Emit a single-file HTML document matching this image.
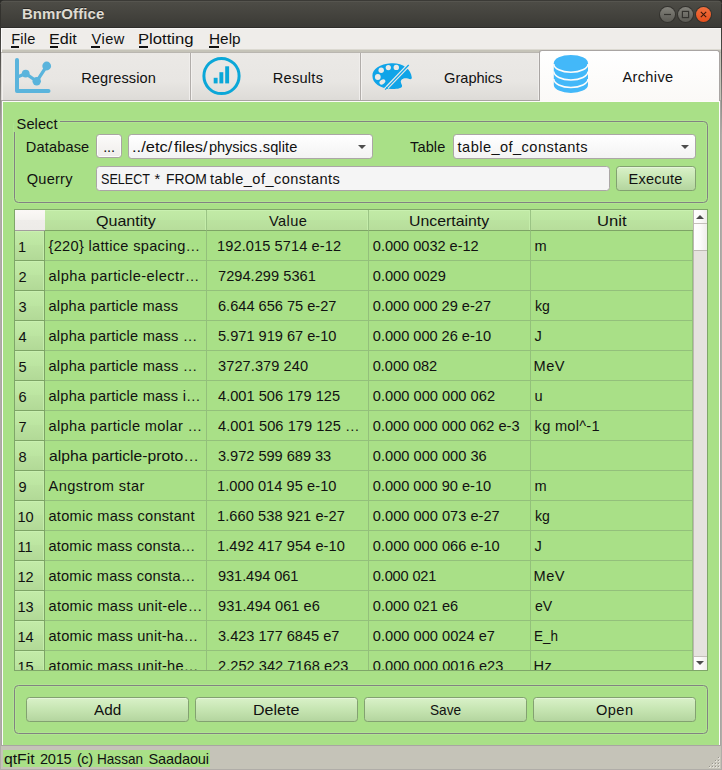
<!DOCTYPE html>
<html>
<head>
<meta charset="utf-8">
<title>BnmrOffice</title>
<style>
*{box-sizing:border-box;margin:0;padding:0}
html,body{width:722px;height:770px;overflow:hidden}
body{position:relative;background:linear-gradient(#33322e 0,#3a3935 28px,#55534f 60px,#8a8883 100px,#b0ada8 135px,#b0ada8 100%);font-family:"Liberation Sans",sans-serif;font-size:14.5px;color:#111}
.abs{position:absolute}
.t{position:absolute;white-space:nowrap;line-height:20px;height:20px;font-size:14.6px}
/* title bar */
#title{left:0;top:0;width:722px;height:28px;background:linear-gradient(#3b3a36 0,#3b3a36 1px,#56554f 1px,#56554f 2px,#4d4c46 2px,#403f3a 20px,#3b3a36 27px,#2e2d2a 27px,#2e2d2a 28px);border-radius:5px 5px 0 0}
#corner-l,#corner-r{top:0;width:6px;height:6px;background:#2b2b28}
#title-text{left:23px;top:4px;color:#dfdbd2;font-weight:bold;font-size:15px;letter-spacing:0.35px;text-shadow:0 -1px 0 rgba(0,0,0,.5)}
.wb{position:absolute;top:6px;width:17px;height:17px;border-radius:50%;background:#33322e}
.wb i{position:absolute;left:1px;top:1px;width:15px;height:15px;border-radius:50%;background:linear-gradient(#83827b,#5b5a54)}
.wb.close i{background:linear-gradient(#f0703f,#e64f1c)}
/* menu bar */
#win{left:1px;top:28px;width:720px;height:741px;background:#c5c3b8}
#menubar{left:1px;top:28px;width:720px;height:21px;background:#efedea;border-top:1px solid #f7f6f4}
#menustrip{left:1px;top:49px;width:720px;height:4px;background:linear-gradient(#dbd9d1 0,#dbd9d1 1px,#c5c3b8 1px,#c5c3b8 3px,#b9b6b0 3px)}
.m{top:29px;font-size:14.6px}
.ul{position:absolute;height:2px;top:46px;background:#111}
/* tabs */
#tabbar{left:1px;top:53px;width:538px;height:47px;background:#b1adaa}
.tab{position:absolute;top:53px;height:47px;background:linear-gradient(#ebe9e6,#e8e6e3 60%,#dddbd7);border-left:1px solid #f3f1ef;border-right:1px solid #f0eeec}
.tab.sel{top:50px;height:51px;background:linear-gradient(#ffffff,#fbf9f7);border:1px solid #a9a5a3;border-bottom:none;border-radius:3px 3px 0 0}
.tabtxt{font-size:14.6px}
/* pane */
#pane{left:1px;top:100px;width:720px;height:646px;background:#a9e087;border:1px solid #a9a5a2}
#paneline{left:2px;top:101px;width:718px;height:644px;border:1px solid #fdfbfb;border-bottom:none}
.gb{position:absolute;border:1px solid #828282;border-radius:4.5px;box-shadow:0 0 0 1px rgba(185,235,155,.45),inset 0 0 0 1px rgba(185,235,155,.45)}
.gbl{background:#a9e087;padding:0 2px}
.inp{position:absolute;background:#f5f5f5;border:1px solid #aba6a6;border-radius:3.5px}
.cmb{position:absolute;background:linear-gradient(#ffffff,#f3f3f3);border:1px solid #aba6a6;border-radius:3.5px}
.btn{position:absolute;border:1px solid #83a171;border-radius:3.5px;background:linear-gradient(#d9f1c8,#c6e5b2 50%,#b4d59f);box-shadow:inset 0 1px 0 rgba(255,255,255,.35)}
.wbtn{position:absolute;border:1px solid #a9a4a3;border-radius:3.5px;background:linear-gradient(#fcfbfa,#efedeb);box-shadow:inset 0 0 0 1px rgba(255,255,255,.8)}
.arrow{position:absolute;width:0;height:0;border-left:4px solid transparent;border-right:4px solid transparent;border-top:4.3px solid #4d4d4d}
/* table */
#tbl{left:14px;top:209px;width:694px;height:462px;border:1px solid #7fa569;background:#a9e087;overflow:hidden}
.hdr{position:absolute;top:0;height:21px;background:linear-gradient(#c2eba6 0,#bde6a2 50%,#bbe3a0 50%,#b7dd9b 100%);border-right:1px solid #9bc485;border-bottom:1px solid #7ea466;box-shadow:inset -1px 0 0 #c5edab,inset 0 1px 0 #c9f0b0;text-align:center;line-height:20px;font-size:14.6px}
.vh{position:absolute;left:0;width:30px;height:30px;background:linear-gradient(#c3eba8 0,#bce5a1 50%,#bae29f 50%,#b2d997 100%);border-right:1px solid #7da366;border-bottom:1px solid #7ea466;box-shadow:inset -1px 0 0 #c5edab,inset 0 1px 0 #c9f0b0}
.row{position:absolute;left:30px;width:648px;height:30px;border-bottom:1px solid #93c07b}
.cell{position:absolute;top:0;height:29px;border-right:1px solid #93c07b;line-height:30px;white-space:nowrap;overflow:hidden;font-size:14.6px}
.num{position:absolute;left:4px;top:7px;line-height:20px;font-size:14.6px}
/* status */
#status{left:0;top:769px;width:722px;height:1px;background:#b0ada8}
#statuslbl{left:3px;top:750px;width:207px;height:17px;background:#a9e087;line-height:18px;font-size:14.6px;padding-left:1px}
</style>
</head>
<body>
<!-- TITLE BAR -->
<div class="abs" id="corner-l" style="left:0"></div>
<div class="abs" id="corner-r" style="left:716px"></div>
<div class="abs" id="title"></div>
<div class="abs" style="left:0;top:4px;width:1px;height:24px;background:#33322e"></div>
<div class="abs" style="left:721px;top:4px;width:1px;height:24px;background:#33322e"></div>
<div class="wb" style="left:659px"><i></i></div>
<div class="wb" style="left:677px"><i></i></div>
<div class="wb close" style="left:695px"><i></i></div>
<svg class="abs" style="left:659px;top:6px" width="54" height="17" viewBox="0 0 54 17">
 <path d="M5 8.5h7" stroke="#34332f" stroke-width="1.2" fill="none"/>
 <rect x="23.4" y="5.4" width="6.2" height="6.2" stroke="#34332f" stroke-width="1.2" fill="none"/>
 <path d="M41.8 5.8l5.4 5.4M47.2 5.8l-5.4 5.4" stroke="#3a180a" stroke-width="1.05" fill="none"/>
</svg>

<!-- MENU BAR -->
<div class="abs" id="win"></div>
<div class="abs" id="menubar"></div>
<div class="abs" id="menustrip"></div>
<div class="abs" style="left:1px;top:28px;width:1px;height:24px;background:#fbfafa"></div>
<div class="ul" style="left:11px;width:8px"></div>
<div class="ul" style="left:50px;width:8px"></div>
<div class="ul" style="left:91px;width:9px"></div>
<div class="ul" style="left:139px;width:9px"></div>
<div class="ul" style="left:209px;width:10px"></div>

<!-- TABS -->
<div class="abs" id="pane"></div>
<div class="abs" id="paneline"></div>
<div class="abs" id="tabbar"></div>
<div class="tab" style="left:1px;width:189px;border-left-color:#dddbd7;box-shadow:inset 1px 0 0 #f3f1ef"></div>
<div class="tab" style="left:191px;width:169px"></div>
<div class="tab" style="left:361px;width:178px"></div>
<div class="tab sel" style="left:539px;width:181px"></div>

<!-- tab icons -->
<svg class="abs" style="left:10px;top:54px" width="46" height="42" viewBox="10 54 46 42">
 <g stroke="#5ab4dc" fill="none" stroke-linecap="round" stroke-linejoin="round">
  <path d="M17 60 V91 H48.5" stroke-width="4"/>
  <path d="M17.5 77 L25.7 73.6 L36.7 81.3 L46.7 66" stroke-width="3.2"/>
 </g>
 <g fill="#5ab4dc"><circle cx="25.7" cy="73.6" r="3.9"/><circle cx="36.7" cy="81.3" r="4.2"/><circle cx="46.7" cy="66" r="4.4"/></g>
</svg>
<svg class="abs" style="left:200px;top:54px" width="44" height="44" viewBox="200 54 44 44">
 <circle cx="221.5" cy="76" r="17.6" stroke="#0ba7d8" stroke-width="3" fill="none"/>
 <g fill="#0ba7d8"><rect x="213.7" y="77.8" width="3.9" height="5.6"/><rect x="219.4" y="72.2" width="3.9" height="11.2"/><rect x="225.2" y="66.3" width="3.9" height="17.1"/></g>
</svg>
<svg class="abs" style="left:370px;top:60px" width="44" height="32" viewBox="370 60 44 32">
 <path fill="#10a4e8" d="M391 63.3 C402 62.6 411 68.5 411.8 77.5 C411.8 79.5 410.5 79.4 408 78.6 C404 77.3 400.5 79.2 400.8 82 C401 84 402.5 85 402 86.6 C401 88.8 396 89.2 391 89 C380 88.6 372.4 83.2 372.4 75.8 C372.4 68.8 380 64 391 63.3 Z"/>
 <g fill="#eceae7"><circle cx="377.8" cy="77" r="2.9"/><circle cx="381.2" cy="70.2" r="2.7"/><circle cx="388.3" cy="67.6" r="2.6"/><circle cx="396.3" cy="67.4" r="2.7"/><ellipse cx="382.4" cy="81.9" rx="3.2" ry="2.2" transform="rotate(-35 382.4 81.9)"/></g>
 <path d="M385.6 89 L408.5 65.2" stroke="#eceae7" stroke-width="3.7"/>
 <path d="M385.2 89.6 L408.7 65" stroke="#10a4e8" stroke-width="1.35"/>
 <path d="M385.6 86.6 l2.6 2.4" stroke="#10a4e8" stroke-width="0.9"/>
</svg>
<svg class="abs" style="left:552px;top:53px" width="38" height="42" viewBox="552 53 38 42">
 <g fill="#43b8f9">
  <path d="M553.8 63.2 a17.1 8.3 0 0 1 34.2 0 v21.5 a17.1 8.3 0 0 1 -34.2 0 Z"/>
 </g>
 <g fill="none" stroke="#fdfcfb" stroke-width="1.5">
  <path d="M553.8 63.9 a17.1 8.3 0 0 0 34.2 0"/>
  <path d="M553.8 71.6 a17.1 8.3 0 0 0 34.2 0"/>
  <path d="M553.8 79.1 a17.1 8.3 0 0 0 34.2 0"/>
 </g>
</svg>

<!-- PANE -->

<!-- Select group -->
<div class="gb" style="left:14px;top:121px;width:694px;height:82px"></div>
<div class="abs" style="left:14px;top:114px;width:46px;height:18px;background:#a9e087"></div>
<div class="wbtn" style="left:96px;top:134px;width:26px;height:24px"></div>
<div class="cmb" style="left:128px;top:134px;width:245px;height:25px"></div>
<div class="arrow" style="left:358px;top:145px"></div>
<div class="cmb" style="left:453px;top:134px;width:243px;height:25px"></div>
<div class="arrow" style="left:681px;top:145px"></div>
<div class="inp" style="left:96px;top:166px;width:514px;height:25px"></div>
<div class="btn" style="left:616px;top:166px;width:80px;height:25px"></div>

<!-- TABLE -->
<div class="abs" id="tbl">
 <div class="hdr" style="left:0;width:30px;background:linear-gradient(#fbf8f6,#f4f2ef 50%,#efedea 50%,#edebe8);border-right:none;border-bottom-color:#a39c9e;box-shadow:none"></div>
 <div class="hdr" style="left:30px;width:162px"></div>
 <div class="hdr" style="left:192px;width:162px"></div>
 <div class="hdr" style="left:354px;width:162px"></div>
 <div class="hdr" style="left:516px;width:163px;border-right:none;box-shadow:inset 0 1px 0 #c9f0b0"></div>
 <!-- rows inserted below -->
<div class="vh" style="top:21px"></div><div class="row" style="top:21px"><div class="cell" style="left:0;width:162px"></div><div class="cell" style="left:162px;width:162px"></div><div class="cell" style="left:324px;width:162px"></div><div class="cell" style="left:486px;width:162px"></div></div>
<div class="vh" style="top:51px"></div><div class="row" style="top:51px"><div class="cell" style="left:0;width:162px"></div><div class="cell" style="left:162px;width:162px"></div><div class="cell" style="left:324px;width:162px"></div><div class="cell" style="left:486px;width:162px"></div></div>
<div class="vh" style="top:81px"></div><div class="row" style="top:81px"><div class="cell" style="left:0;width:162px"></div><div class="cell" style="left:162px;width:162px"></div><div class="cell" style="left:324px;width:162px"></div><div class="cell" style="left:486px;width:162px"></div></div>
<div class="vh" style="top:111px"></div><div class="row" style="top:111px"><div class="cell" style="left:0;width:162px"></div><div class="cell" style="left:162px;width:162px"></div><div class="cell" style="left:324px;width:162px"></div><div class="cell" style="left:486px;width:162px"></div></div>
<div class="vh" style="top:141px"></div><div class="row" style="top:141px"><div class="cell" style="left:0;width:162px"></div><div class="cell" style="left:162px;width:162px"></div><div class="cell" style="left:324px;width:162px"></div><div class="cell" style="left:486px;width:162px"></div></div>
<div class="vh" style="top:171px"></div><div class="row" style="top:171px"><div class="cell" style="left:0;width:162px"></div><div class="cell" style="left:162px;width:162px"></div><div class="cell" style="left:324px;width:162px"></div><div class="cell" style="left:486px;width:162px"></div></div>
<div class="vh" style="top:201px"></div><div class="row" style="top:201px"><div class="cell" style="left:0;width:162px"></div><div class="cell" style="left:162px;width:162px"></div><div class="cell" style="left:324px;width:162px"></div><div class="cell" style="left:486px;width:162px"></div></div>
<div class="vh" style="top:231px"></div><div class="row" style="top:231px"><div class="cell" style="left:0;width:162px"></div><div class="cell" style="left:162px;width:162px"></div><div class="cell" style="left:324px;width:162px"></div><div class="cell" style="left:486px;width:162px"></div></div>
<div class="vh" style="top:261px"></div><div class="row" style="top:261px"><div class="cell" style="left:0;width:162px"></div><div class="cell" style="left:162px;width:162px"></div><div class="cell" style="left:324px;width:162px"></div><div class="cell" style="left:486px;width:162px"></div></div>
<div class="vh" style="top:291px"></div><div class="row" style="top:291px"><div class="cell" style="left:0;width:162px"></div><div class="cell" style="left:162px;width:162px"></div><div class="cell" style="left:324px;width:162px"></div><div class="cell" style="left:486px;width:162px"></div></div>
<div class="vh" style="top:321px"></div><div class="row" style="top:321px"><div class="cell" style="left:0;width:162px"></div><div class="cell" style="left:162px;width:162px"></div><div class="cell" style="left:324px;width:162px"></div><div class="cell" style="left:486px;width:162px"></div></div>
<div class="vh" style="top:351px"></div><div class="row" style="top:351px"><div class="cell" style="left:0;width:162px"></div><div class="cell" style="left:162px;width:162px"></div><div class="cell" style="left:324px;width:162px"></div><div class="cell" style="left:486px;width:162px"></div></div>
<div class="vh" style="top:381px"></div><div class="row" style="top:381px"><div class="cell" style="left:0;width:162px"></div><div class="cell" style="left:162px;width:162px"></div><div class="cell" style="left:324px;width:162px"></div><div class="cell" style="left:486px;width:162px"></div></div>
<div class="vh" style="top:411px"></div><div class="row" style="top:411px"><div class="cell" style="left:0;width:162px"></div><div class="cell" style="left:162px;width:162px"></div><div class="cell" style="left:324px;width:162px"></div><div class="cell" style="left:486px;width:162px"></div></div>
<div class="vh" style="top:441px"></div><div class="row" style="top:441px"><div class="cell" style="left:0;width:162px"></div><div class="cell" style="left:162px;width:162px"></div><div class="cell" style="left:324px;width:162px"></div><div class="cell" style="left:486px;width:162px"></div></div>
 <!-- scrollbar -->
 <div class="abs" style="left:678px;top:0;width:14px;height:460px;background:#e5e2de;border-left:1px solid #bcb8b1"></div>
 <div class="abs" style="left:679px;top:0;width:13px;height:14px;background:linear-gradient(90deg,#fefefe,#fbfaf9 50%,#efedea);border-bottom:1px solid #c4c0ba"></div>
 <div class="abs" style="left:679px;top:14px;width:13px;height:27px;background:linear-gradient(90deg,#fefefe,#fbfaf9 50%,#efedea);border-bottom:1px solid #bdb9b3"></div>
 <div class="abs" style="left:679px;top:446px;width:13px;height:14px;background:linear-gradient(90deg,#fefefe,#fbfaf9 50%,#efedea);border-top:1px solid #c4c0ba"></div>
 <div class="arrow" style="left:681px;top:5px;border-top:none;border-bottom:4.2px solid #4a4a4a;border-left-width:4px;border-right-width:4px"></div>
 <div class="arrow" style="left:681px;top:451px;border-top-width:4.2px"></div>
</div>

<!-- bottom group -->
<div class="gb" style="left:14px;top:685px;width:694px;height:49px"></div>
<div class="btn" style="left:26px;top:697px;width:163px;height:25px"></div>
<div class="btn" style="left:195px;top:697px;width:163px;height:25px"></div>
<div class="btn" style="left:364px;top:697px;width:163px;height:25px"></div>
<div class="btn" style="left:533px;top:697px;width:163px;height:25px"></div>

<div class="abs" id="clip" style="left:0;top:0;width:722px;height:670px;overflow:hidden">
<div class="t" style="left:18.00px;top:236.94px;letter-spacing:0.000px">1</div>
<div class="t" style="left:48.50px;top:235.94px;letter-spacing:0.308px">{220} lattice spacing…</div>
<div class="t" style="left:217.00px;top:235.94px;letter-spacing:0.093px">192.015 5714 e-12</div>
<div class="t" style="left:372.80px;top:235.94px;letter-spacing:-0.028px">0.000 0032 e-12</div>
<div class="t" style="left:534.60px;top:235.94px;letter-spacing:0.000px">m</div>
<div class="t" style="left:18.40px;top:266.94px;letter-spacing:0.000px">2</div>
<div class="t" style="left:48.50px;top:265.94px;letter-spacing:0.421px">alpha particle-electr…</div>
<div class="t" style="left:218.00px;top:265.94px;letter-spacing:0.036px">7294.299 5361</div>
<div class="t" style="left:372.80px;top:265.94px;letter-spacing:-0.003px">0.000 0029</div>
<div class="t" style="left:18.40px;top:296.94px;letter-spacing:0.000px">3</div>
<div class="t" style="left:48.50px;top:295.94px;letter-spacing:0.209px">alpha particle mass</div>
<div class="t" style="left:218.00px;top:295.94px;letter-spacing:-0.004px">6.644 656 75 e-27</div>
<div class="t" style="left:372.80px;top:295.94px;letter-spacing:-0.016px">0.000 000 29 e-27</div>
<div class="t" style="left:534.60px;top:295.94px;letter-spacing:0.000px;transform:scaleX(0.9610);transform-origin:0 0">kg</div>
<div class="t" style="left:18.40px;top:326.94px;letter-spacing:0.000px">4</div>
<div class="t" style="left:48.50px;top:325.94px;letter-spacing:0.221px">alpha particle mass …</div>
<div class="t" style="left:218.00px;top:325.94px;letter-spacing:-0.004px">5.971 919 67 e-10</div>
<div class="t" style="left:372.80px;top:325.94px;letter-spacing:-0.016px">0.000 000 26 e-10</div>
<div class="t" style="left:534.60px;top:325.94px;letter-spacing:0.000px">J</div>
<div class="t" style="left:18.40px;top:356.94px;letter-spacing:0.000px">5</div>
<div class="t" style="left:48.50px;top:355.94px;letter-spacing:0.221px">alpha particle mass …</div>
<div class="t" style="left:218.00px;top:355.94px;letter-spacing:0.077px">3727.379 240</div>
<div class="t" style="left:372.80px;top:355.94px;letter-spacing:-0.063px">0.000 082</div>
<div class="t" style="left:533.60px;top:355.94px;letter-spacing:0.413px">MeV</div>
<div class="t" style="left:18.40px;top:386.94px;letter-spacing:0.000px">6</div>
<div class="t" style="left:48.50px;top:385.94px;letter-spacing:0.218px">alpha particle mass i…</div>
<div class="t" style="left:218.00px;top:385.94px;letter-spacing:0.024px">4.001 506 179 125</div>
<div class="t" style="left:372.80px;top:385.94px;letter-spacing:0.030px">0.000 000 000 062</div>
<div class="t" style="left:534.60px;top:385.94px;letter-spacing:0.000px">u</div>
<div class="t" style="left:18.40px;top:416.94px;letter-spacing:0.000px">7</div>
<div class="t" style="left:48.50px;top:415.94px;letter-spacing:0.366px">alpha particle molar …</div>
<div class="t" style="left:218.00px;top:415.94px;letter-spacing:0.067px">4.001 506 179 125 …</div>
<div class="t" style="left:372.80px;top:415.94px;letter-spacing:-0.008px">0.000 000 000 062 e-3</div>
<div class="t" style="left:534.60px;top:415.94px;letter-spacing:0.276px">kg mol^-1</div>
<div class="t" style="left:18.40px;top:446.94px;letter-spacing:0.000px">8</div>
<div class="t" style="left:48.50px;top:445.94px;letter-spacing:0.000px;transform:scaleX(1.0752);transform-origin:0 0">alpha particle-proto…</div>
<div class="t" style="left:218.00px;top:445.94px;letter-spacing:-0.027px">3.972 599 689 33</div>
<div class="t" style="left:372.80px;top:445.94px;letter-spacing:0.020px">0.000 000 000 36</div>
<div class="t" style="left:18.40px;top:476.94px;letter-spacing:0.000px">9</div>
<div class="t" style="left:48.50px;top:475.94px;letter-spacing:0.427px">Angstrom star</div>
<div class="t" style="left:217.00px;top:475.94px;letter-spacing:0.059px">1.000 014 95 e-10</div>
<div class="t" style="left:372.80px;top:475.94px;letter-spacing:-0.004px">0.000 000 90 e-10</div>
<div class="t" style="left:534.60px;top:475.94px;letter-spacing:0.000px">m</div>
<div class="t" style="left:17.40px;top:506.94px;letter-spacing:-0.116px">10</div>
<div class="t" style="left:48.50px;top:505.94px;letter-spacing:0.254px">atomic mass constant</div>
<div class="t" style="left:217.00px;top:505.94px;letter-spacing:0.072px">1.660 538 921 e-27</div>
<div class="t" style="left:372.80px;top:505.94px;letter-spacing:0.019px">0.000 000 073 e-27</div>
<div class="t" style="left:534.60px;top:505.94px;letter-spacing:0.000px;transform:scaleX(0.9610);transform-origin:0 0">kg</div>
<div class="t" style="left:17.40px;top:536.94px;letter-spacing:-0.033px">11</div>
<div class="t" style="left:48.50px;top:535.94px;letter-spacing:0.186px">atomic mass consta…</div>
<div class="t" style="left:217.00px;top:535.94px;letter-spacing:0.072px">1.492 417 954 e-10</div>
<div class="t" style="left:372.80px;top:535.94px;letter-spacing:0.019px">0.000 000 066 e-10</div>
<div class="t" style="left:534.60px;top:535.94px;letter-spacing:0.000px">J</div>
<div class="t" style="left:17.40px;top:566.94px;letter-spacing:-0.116px">12</div>
<div class="t" style="left:48.50px;top:565.94px;letter-spacing:0.186px">atomic mass consta…</div>
<div class="t" style="left:218.00px;top:565.94px;letter-spacing:-0.074px">931.494 061</div>
<div class="t" style="left:372.80px;top:565.94px;letter-spacing:-0.163px">0.000 021</div>
<div class="t" style="left:533.60px;top:565.94px;letter-spacing:0.413px">MeV</div>
<div class="t" style="left:17.40px;top:596.94px;letter-spacing:-0.116px">13</div>
<div class="t" style="left:48.50px;top:595.94px;letter-spacing:0.269px">atomic mass unit-ele…</div>
<div class="t" style="left:218.00px;top:595.94px;letter-spacing:0.029px">931.494 061 e6</div>
<div class="t" style="left:372.80px;top:595.94px;letter-spacing:0.010px">0.000 021 e6</div>
<div class="t" style="left:534.60px;top:595.94px;letter-spacing:0.000px;transform:scaleX(0.9660);transform-origin:0 0">eV</div>
<div class="t" style="left:17.40px;top:626.94px;letter-spacing:-0.116px">14</div>
<div class="t" style="left:48.50px;top:625.94px;letter-spacing:0.233px">atomic mass unit-ha…</div>
<div class="t" style="left:218.00px;top:625.94px;letter-spacing:-0.020px">3.423 177 6845 e7</div>
<div class="t" style="left:372.80px;top:625.94px;letter-spacing:0.024px">0.000 000 0024 e7</div>
<div class="t" style="left:533.68px;top:625.94px;letter-spacing:0.000px;transform:scaleX(0.9215);transform-origin:0 0">E_h</div>
<div class="t" style="left:17.40px;top:656.94px;letter-spacing:-0.116px">15</div>
<div class="t" style="left:48.50px;top:655.94px;letter-spacing:0.248px">atomic mass unit-he…</div>
<div class="t" style="left:218.00px;top:655.94px;letter-spacing:0.033px">2.252 342 7168 e23</div>
<div class="t" style="left:372.80px;top:655.94px;letter-spacing:0.039px">0.000 000 0016 e23</div>
<div class="t" style="left:533.60px;top:655.94px;letter-spacing:0.361px">Hz</div>
</div>
<!-- STATUS BAR -->
<div class="abs" id="status"></div>
<div class="abs" id="statuslbl"></div>
<svg class="abs" style="left:708px;top:755px" width="14" height="14" viewBox="0 0 14 14" shape-rendering="crispEdges">
 <g fill="#e0ded6"><rect x="10" y="2" width="2" height="2"/><rect x="7" y="5" width="2" height="2"/><rect x="10" y="5" width="2" height="2"/><rect x="4" y="8" width="2" height="2"/><rect x="7" y="8" width="2" height="2"/><rect x="10" y="8" width="2" height="2"/><rect x="1" y="11" width="2" height="2"/><rect x="4" y="11" width="2" height="2"/><rect x="7" y="11" width="2" height="2"/><rect x="10" y="11" width="2" height="2"/></g>
 <g fill="#97958e"><rect x="10" y="2" width="1" height="1"/><rect x="7" y="5" width="1" height="1"/><rect x="10" y="5" width="1" height="1"/><rect x="4" y="8" width="1" height="1"/><rect x="7" y="8" width="1" height="1"/><rect x="10" y="8" width="1" height="1"/><rect x="1" y="11" width="1" height="1"/><rect x="4" y="11" width="1" height="1"/><rect x="7" y="11" width="1" height="1"/><rect x="10" y="11" width="1" height="1"/></g>
</svg>
<div class="t" style="left:21.90px;top:4.25px;letter-spacing:0.074px;font-weight:bold;font-size:15.0px;color:#dfdbd2;text-shadow:0 -1px 0 rgba(0,0,0,.45)">BnmrOffice</div>
<div class="t" style="left:11.20px;top:28.94px;letter-spacing:0.234px">File</div>
<div class="t" style="left:49.20px;top:28.94px;letter-spacing:0.000px;transform:scaleX(1.1041);transform-origin:0 0">Edit</div>
<div class="t" style="left:91.60px;top:28.94px;letter-spacing:0.424px">View</div>
<div class="t" style="left:138.46px;top:28.94px;letter-spacing:0.000px;transform:scaleX(1.1417);transform-origin:0 0">Plotting</div>
<div class="t" style="left:208.55px;top:28.94px;letter-spacing:0.000px;transform:scaleX(1.0520);transform-origin:0 0">Help</div>
<div class="t" style="left:81.20px;top:67.94px;letter-spacing:0.100px">Regression</div>
<div class="t" style="left:272.70px;top:67.94px;letter-spacing:0.272px">Results</div>
<div class="t" style="left:444.10px;top:67.94px;letter-spacing:-0.014px">Graphics</div>
<div class="t" style="left:622.40px;top:66.94px;letter-spacing:0.359px">Archive</div>
<div class="t" style="left:16.60px;top:113.94px;letter-spacing:0.079px">Select</div>
<div class="t" style="left:25.80px;top:136.94px;letter-spacing:0.135px">Database</div>
<div class="t" style="left:103.20px;top:136.94px;letter-spacing:-0.155px">...</div>
<div class="t" style="left:131.87px;top:136.94px;letter-spacing:0.000px;transform:scaleX(1.1282);transform-origin:0 0">../etc/</div>
<div class="t" style="left:173.60px;top:136.94px;letter-spacing:0.000px;transform:scaleX(1.1178);transform-origin:0 0">files/</div>
<div class="t" style="left:209.00px;top:136.94px;letter-spacing:-0.078px">physics</div>
<div class="t" style="left:258.60px;top:136.94px;letter-spacing:0.099px">.sqlite</div>
<div class="t" style="left:410.00px;top:136.94px;letter-spacing:0.107px">Table</div>
<div class="t" style="left:457.60px;top:136.94px;letter-spacing:0.440px">table_of_constants</div>
<div class="t" style="left:26.80px;top:168.94px;letter-spacing:0.219px">Querry</div>
<div class="t" style="left:100.60px;top:168.94px;letter-spacing:0.000px;transform:scaleX(0.8636);transform-origin:0 0">SELECT</div>
<div class="t" style="left:154.50px;top:168.94px;letter-spacing:0.000px">*</div>
<div class="t" style="left:165.65px;top:168.94px;letter-spacing:0.000px;transform:scaleX(0.9533);transform-origin:0 0">FROM</div>
<div class="t" style="left:210.00px;top:168.94px;letter-spacing:0.434px">table_of_constants</div>
<div class="t" style="left:628.60px;top:168.94px;letter-spacing:0.164px">Execute</div>
<div class="t" style="left:95.80px;top:210.94px;letter-spacing:0.000px;transform:scaleX(1.1008);transform-origin:0 0">Quantity</div>
<div class="t" style="left:269.00px;top:210.94px;letter-spacing:0.419px">Value</div>
<div class="t" style="left:409.21px;top:210.94px;letter-spacing:0.000px;transform:scaleX(1.0855);transform-origin:0 0">Uncertainty</div>
<div class="t" style="left:596.96px;top:210.94px;letter-spacing:0.000px;transform:scaleX(1.1366);transform-origin:0 0">Unit</div>
<div class="t" style="left:93.70px;top:699.94px;letter-spacing:0.000px;transform:scaleX(1.0483);transform-origin:0 0">Add</div>
<div class="t" style="left:253.00px;top:699.94px;letter-spacing:0.000px;transform:scaleX(1.0982);transform-origin:0 0">Delete</div>
<div class="t" style="left:429.80px;top:699.94px;letter-spacing:0.000px;transform:scaleX(0.9352);transform-origin:0 0">Save</div>
<div class="t" style="left:596.00px;top:699.94px;letter-spacing:0.439px">Open</div>
<div class="t" style="left:4.20px;top:748.94px;letter-spacing:0.000px;transform:scaleX(1.0767);transform-origin:0 0">qtFit</div>
<div class="t" style="left:39.90px;top:748.94px;letter-spacing:-0.216px">2015</div>
<div class="t" style="left:76.90px;top:748.94px;letter-spacing:-0.428px">(c)</div>
<div class="t" style="left:96.67px;top:748.94px;letter-spacing:0.000px;transform:scaleX(0.9304);transform-origin:0 0">Hassan</div>
<div class="t" style="left:148.50px;top:748.94px;letter-spacing:-0.162px">Saadaoui</div>
</body>
</html>
